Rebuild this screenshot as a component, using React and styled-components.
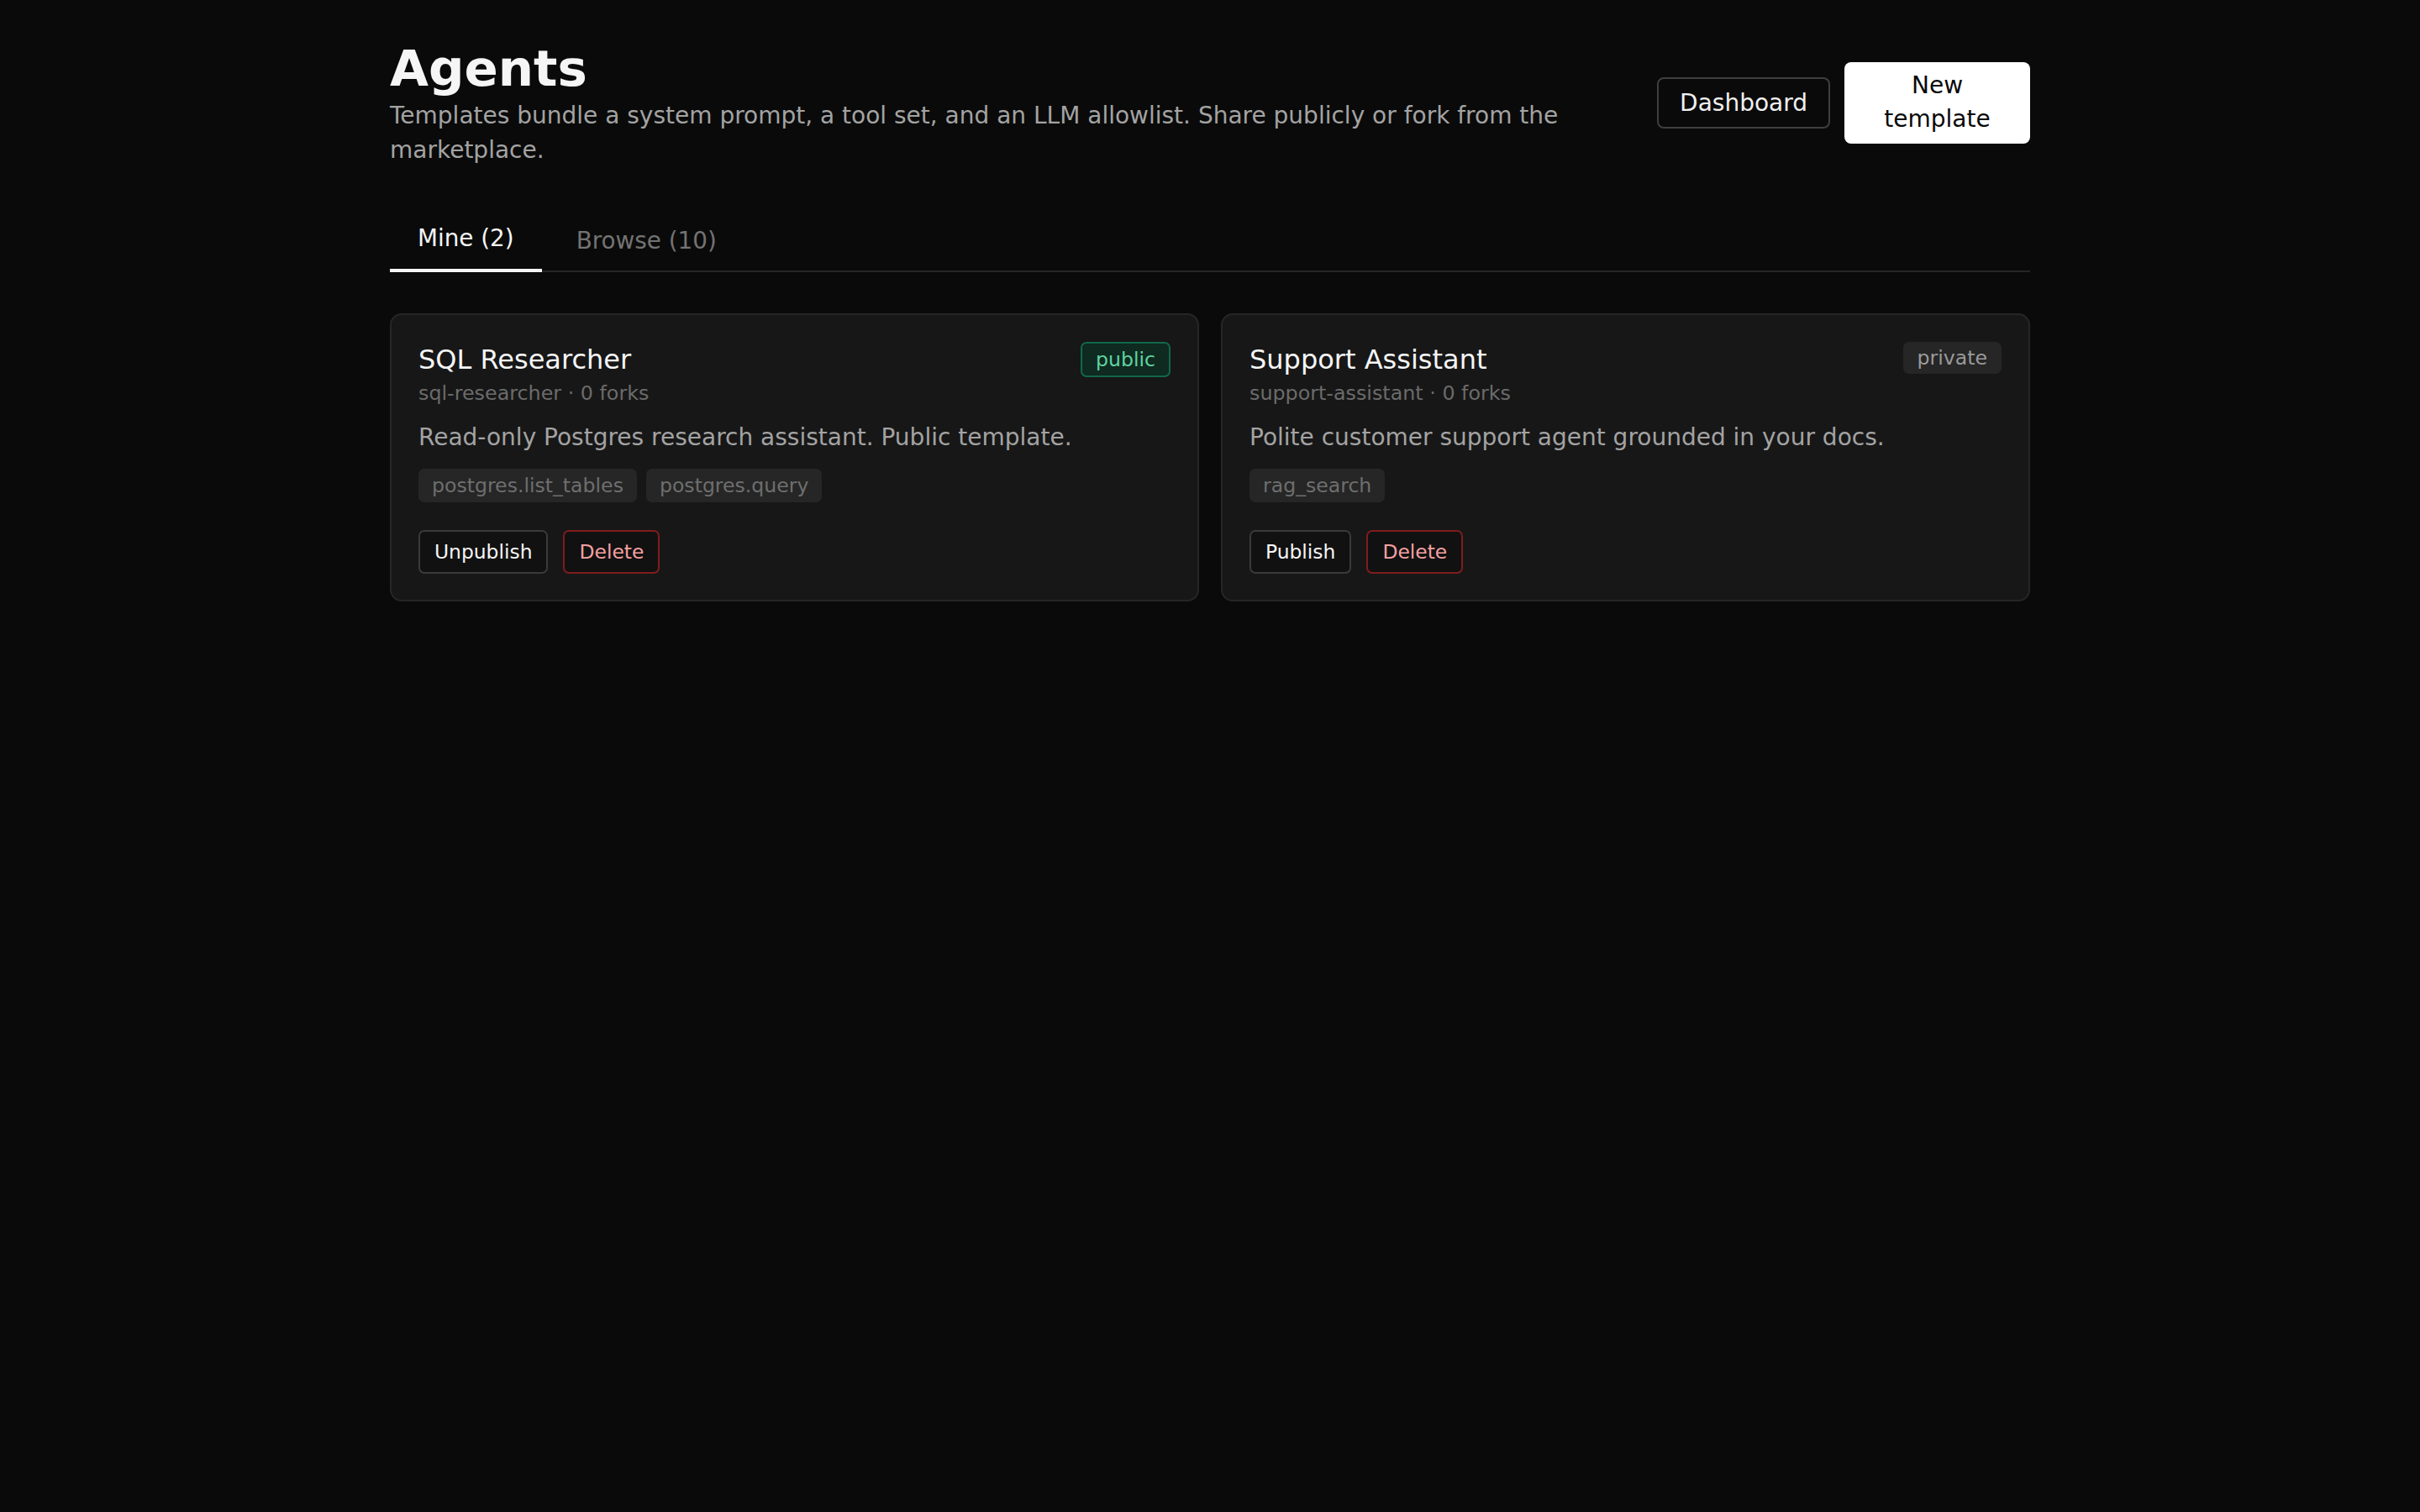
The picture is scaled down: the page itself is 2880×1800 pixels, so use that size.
import React from "react";
import styled, { createGlobalStyle } from "styled-components";

const Global = createGlobalStyle`
  html, body {
    margin: 0;
    padding: 0;
    background: #0a0a0a;
    min-height: 100%;
  }
  body {
    font-family: "DejaVu Sans", "Noto Sans", sans-serif;
    color: #f5f5f5;
    min-height: 1800px;
  }
`;

const Page = styled.div`
  max-width: 1952px;
  margin: 0 auto;
  padding-top: 46px;
`;

const Header = styled.header`
  display: flex;
  justify-content: space-between;
  align-items: center;
  gap: 29px;
`;

const Intro = styled.div`
  flex: 1;
  min-width: 0;
`;

const Title = styled.h1`
  margin: 0;
  font-size: 59.4px;
  line-height: 1.2;
  font-weight: 700;
  color: #f5f5f5;
`;

const Lead = styled.p`
  margin: 1px 0 0;
  font-size: 28px;
  line-height: 1.44;
  color: #a3a3a3;
`;

const Actions = styled.div`
  display: flex;
  align-items: center;
  gap: 17px;
  flex-shrink: 0;
`;

const GhostButton = styled.button`
  font-family: inherit;
  font-size: 28px;
  line-height: normal;
  padding: 12px 25px;
  background: transparent;
  color: #f0f0f0;
  border: 2px solid #3f3f3f;
  border-radius: 8px;
`;

const PrimaryButton = styled.button`
  font-family: inherit;
  font-size: 28px;
  line-height: 1.44;
  width: 221px;
  padding: 8px 20px;
  background: #ffffff;
  color: #0a0a0a;
  border: none;
  border-radius: 8px;
  text-align: center;
`;

const TabBar = styled.nav`
  display: flex;
  align-items: flex-end;
  gap: 8px;
  margin-top: 54px;
  border-bottom: 2px solid #262626;
`;

const Tab = styled.div`
  padding: 14px 33px 20px;
  font-size: 27.8px;
  line-height: normal;
  margin-bottom: -2px;
  color: ${(p) => (p.$active ? "#f5f5f5" : "#737373")};
  border-bottom: 4px solid ${(p) => (p.$active ? "#f5f5f5" : "transparent")};
  padding-bottom: ${(p) => (p.$active ? "20px" : "17px")};
`;

const Grid = styled.div`
  display: grid;
  grid-template-columns: 1fr 1fr;
  gap: 26px;
  margin-top: 49px;
`;

const Card = styled.article`
  background: #171717;
  border: 2px solid #262626;
  border-radius: 14px;
  padding: 32px 32px 31px;
`;

const CardTop = styled.div`
  display: flex;
  justify-content: space-between;
  align-items: flex-start;
  gap: 16px;
`;

const CardName = styled.h2`
  margin: 0;
  font-size: 32px;
  line-height: 1.36;
  font-weight: 400;
  color: #f5f5f5;
`;

const Meta = styled.div`
  margin-top: 2px;
  font-size: 23.8px;
  line-height: 1.38;
  color: #6b6b6b;
`;

const Badge = styled.span`
  font-size: 23.6px;
  line-height: normal;
  padding: ${(p) => (p.$public ? "5px 16px" : "5px 17px")};
  border-radius: 7px;
  background: ${(p) => (p.$public ? "#0f2a20" : "#262626")};
  color: ${(p) => (p.$public ? "#5fd3a0" : "#9a9a9a")};
  border: ${(p) => (p.$public ? "2px solid #11684a" : "none")};
`;

const Desc = styled.p`
  margin: 15px 0 0;
  font-size: 28px;
  line-height: 1.5;
  color: #a3a3a3;
`;

const Tags = styled.div`
  display: flex;
  flex-wrap: wrap;
  gap: 11px;
  margin-top: 16px;
`;

const Tag = styled.span`
  font-size: 23.6px;
  line-height: normal;
  padding: 6px 16px;
  border-radius: 7px;
  background: #262626;
  color: #6e6e6e;
`;

const Row = styled.div`
  display: flex;
  gap: 18px;
  margin-top: 33px;
`;

const CardButton = styled.button`
  font-family: inherit;
  font-size: 23.4px;
  line-height: normal;
  padding: 10px 17px;
  border-radius: 7px;
  background: #111111;
  color: ${(p) => (p.$danger ? "#f4a0a0" : "#f5f5f5")};
  border: 2px solid ${(p) => (p.$danger ? "#7f1d1d" : "#3a3a3a")};
`;

const templates = [
  {
    name: "SQL Researcher",
    slug: "sql-researcher",
    forks: 0,
    desc: "Read-only Postgres research assistant. Public template.",
    tools: ["postgres.list_tables", "postgres.query"],
    isPublic: true,
  },
  {
    name: "Support Assistant",
    slug: "support-assistant",
    forks: 0,
    desc: "Polite customer support agent grounded in your docs.",
    tools: ["rag_search"],
    isPublic: false,
  },
];

function TemplateCard({ t }) {
  return (
    <Card>
      <CardTop>
        <div>
          <CardName>{t.name}</CardName>
          <Meta>
            {t.slug} · {t.forks} forks
          </Meta>
        </div>
        <Badge $public={t.isPublic}>{t.isPublic ? "public" : "private"}</Badge>
      </CardTop>
      <Desc>{t.desc}</Desc>
      <Tags>
        {t.tools.map((tool) => (
          <Tag key={tool}>{tool}</Tag>
        ))}
      </Tags>
      <Row>
        <CardButton>{t.isPublic ? "Unpublish" : "Publish"}</CardButton>
        <CardButton $danger>Delete</CardButton>
      </Row>
    </Card>
  );
}

export default function App() {
  return (
    <>
      <Global />
      <Page>
        <Header>
          <Intro>
            <Title>Agents</Title>
            <Lead>
              Templates bundle a system prompt, a tool set, and an LLM allowlist. Share publicly or fork from the
              marketplace.
            </Lead>
          </Intro>
          <Actions>
            <GhostButton>Dashboard</GhostButton>
            <PrimaryButton>New template</PrimaryButton>
          </Actions>
        </Header>

        <TabBar>
          <Tab $active>Mine (2)</Tab>
          <Tab>Browse (10)</Tab>
        </TabBar>

        <Grid>
          {templates.map((t) => (
            <TemplateCard key={t.slug} t={t} />
          ))}
        </Grid>
      </Page>
    </>
  );
}
